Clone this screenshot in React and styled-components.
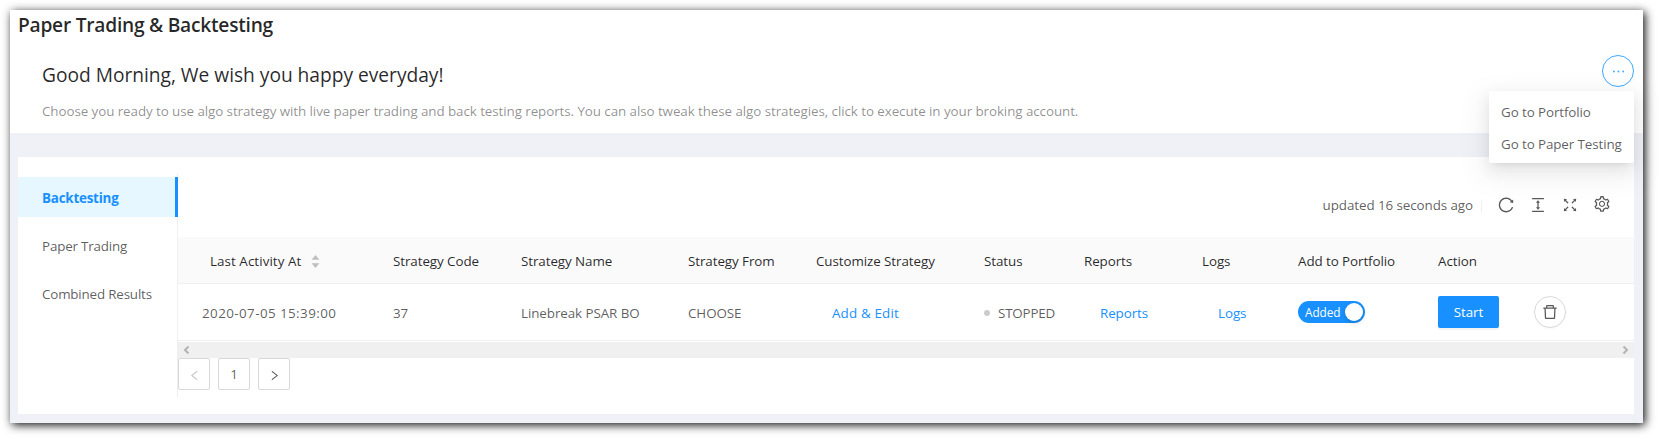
import React from 'react';
import styled, { createGlobalStyle } from 'styled-components';
import {
  AiOutlineReload,
  AiOutlineColumnHeight,
  AiOutlineFullscreen,
  AiOutlineSetting,
  AiOutlineDelete,
  AiOutlineEllipsis,
  AiOutlineLeft,
  AiOutlineRight,
  AiFillCaretUp,
  AiFillCaretDown,
} from 'react-icons/ai';

const GlobalStyle = createGlobalStyle`
  *, *::before, *::after { box-sizing: border-box; }
  body {
    margin: 0;
    background: #fff;
    color: rgba(0, 0, 0, 0.65);
    font: 400 13.4px/22px "Open Sans", "Noto Sans", sans-serif;
    letter-spacing: -0.08px;
    white-space: nowrap;
  }
  a { color: #1890ff; text-decoration: none; }
`;

const Stage = styled.div`
  height: 439px;
  padding: 10px 16px 16px 10px;
  overflow: hidden;
`;

const Window = styled.main`
  height: 413px;
  background: #f0f1f6;
  box-shadow: 2px 2px 9px rgba(0, 0, 0, 0.95);
`;

const Header = styled.header`
  height: 123px;
  padding: 0 9px 0 8px;
  background: #fff;
`;

const Title = styled.h1`
  margin: 0;
  height: 45px;
  color: rgba(0, 0, 0, 0.85);
  font-size: 19.2px;
  font-weight: 600;
  line-height: 30px;
  letter-spacing: -0.25px;
`;

const Welcome = styled.div`
  display: flex;
  justify-content: space-between;
  padding-left: 24px;
`;

const Greeting = styled.h2`
  margin: 6px 0 11px;
  color: rgba(0, 0, 0, 0.85);
  font-size: 19.2px;
  font-weight: 400;
  line-height: 28px;
  letter-spacing: -0.02px;
`;

const Description = styled.p`
  margin: 0;
  color: rgba(0, 0, 0, 0.45);
`;

const MenuAnchor = styled.div`
  position: relative;
  height: 32px;
`;

const CircleButton = styled.button`
  display: flex;
  align-items: center;
  justify-content: center;
  width: 32px;
  height: 32px;
  padding: 0;
  border: 1px solid ${(p) => (p.$active ? '#40a9ff' : '#d9d9d9')};
  border-radius: 50%;
  background: #fff;
  color: ${(p) => (p.$active ? '#40a9ff' : 'rgba(0, 0, 0, 0.65)')};
  font-size: ${(p) => (p.$active ? 17 : 18)}px;
  box-shadow: ${(p) => (p.$active ? 'none' : '0 2px 0 rgba(0, 0, 0, 0.015)')};
`;

const Menu = styled.ul`
  position: absolute;
  z-index: 2;
  top: 36px;
  right: 0;
  width: 145px;
  margin: 0;
  padding: 5px 0 3px;
  list-style: none;
  background: #fff;
  border-radius: 2px;
  box-shadow: 0 3px 6px -4px rgba(0, 0, 0, 0.12), 0 6px 16px 0 rgba(0, 0, 0, 0.08),
    0 9px 28px 8px rgba(0, 0, 0, 0.05);
`;

const MenuItem = styled.li`
  padding: 5px 12px;
  letter-spacing: -0.1px;
`;

const Card = styled.section`
  display: flex;
  height: 257px;
  margin: 24px 9px 0 8px;
  padding-top: 16px;
  background: #fff;
`;

const Tabs = styled.nav`
  display: flex;
  flex: none;
  flex-direction: column;
  gap: 8px;
  width: 160px;
  height: 225px;
  padding-top: 4px;
  border-right: 1px solid #f0f0f0;
`;

const Tab = styled.div`
  height: 40px;
  padding-left: 24px;
  line-height: 43px;
  letter-spacing: -0.18px;
  ${(p) =>
    p.$active &&
    `
    margin-right: -1px;
    border-right: 3px solid #1890ff;
    background: #e6f7ff;
    color: #1890ff;
    font-weight: 700;
    letter-spacing: -0.22px;
  `}
`;

const Content = styled.div`
  flex: 1;
  min-width: 0;
`;

const Toolbar = styled.div`
  display: flex;
  align-items: center;
  justify-content: flex-end;
  height: 64px;
  padding-right: 23px;
`;

const Divider = styled.span`
  width: 1px;
  height: 13px;
  margin: 3px 15px 0 8px;
  background: #f0f0f0;
`;

const ToolIcons = styled.div`
  display: flex;
  align-items: center;
  gap: 14px;
  font-size: 18px;
`;

const SettingsIcon = styled(AiOutlineSetting)`
  margin-top: -2px;
`;

const rowGrid = `
  display: grid;
  grid-template-columns: 191px 128px 167px 128px 168px 100px 118px 96px 140px 96px 1fr;
  align-items: center;
  padding-left: 24px;
`;

const HeadRow = styled.div`
  ${rowGrid}
  height: 47px;
  padding-top: 2px;
  background: #fafafa;
  border-bottom: 1px solid #f0f0f0;
  color: rgba(0, 0, 0, 0.85);
`;

const BodyRow = styled.div`
  ${rowGrid}
  height: 57px;
  border-bottom: 1px solid #f0f0f0;
`;

const SortLabel = styled.span`
  display: flex;
  align-items: center;
  gap: 9px;
  padding-left: 8px;
  letter-spacing: 0.06px;
`;

const Sorter = styled.span`
  display: flex;
  flex-direction: column;
  color: #bfbfbf;
  font-size: 11px;
  svg + svg { margin-top: -3px; }
`;

const Cell = styled.span`
  padding-top: 2px;
`;

const Time = styled(Cell)`
  letter-spacing: 0.42px;
`;

const Link = styled.a`
  padding: 2px 0 0 16px;
  letter-spacing: ${(p) => p.$spacing || '-0.08px'};
`;

const Status = styled.span`
  display: flex;
  align-items: center;
  gap: 8px;
  padding-top: 2px;
  letter-spacing: -0.2px;
  &::before {
    content: '';
    width: 6px;
    height: 6px;
    border-radius: 50%;
    background: #ccc;
  }
`;

const Switch = styled.span`
  display: flex;
  align-items: center;
  justify-content: space-between;
  width: 67px;
  height: 22px;
  padding: 0 2px 0 7px;
  border-radius: 11px;
  background: #1890ff;
  color: #fff;
  font-size: 11.8px;
  line-height: 24px;
  &::after {
    content: '';
    width: 18px;
    height: 18px;
    border-radius: 50%;
    background: #fff;
    box-shadow: 0 2px 4px rgba(0, 35, 11, 0.2);
  }
`;

const PrimaryButton = styled.button`
  width: 61px;
  height: 32px;
  padding: 0;
  border: 0;
  border-radius: 2px;
  background: #1890ff;
  color: #fff;
  font: inherit;
  letter-spacing: -0.1px;
  box-shadow: 0 2px 0 rgba(0, 0, 0, 0.045);
`;

const ScrollBar = styled.div`
  display: flex;
  align-items: center;
  justify-content: space-between;
  height: 16px;
  margin-top: 1px;
  padding: 0 5px;
  background: #f0f0f0;
`;

const ScrollArrow = styled.svg`
  width: 7px;
  height: 8px;
  fill: none;
  stroke: #b3b3b3;
  stroke-width: 2;
`;

const Pagination = styled.div`
  display: flex;
  gap: 8px;
`;

const Page = styled.span`
  display: flex;
  align-items: center;
  justify-content: center;
  width: 32px;
  height: 32px;
  border: 1px solid #d9d9d9;
  border-radius: 2px;
  color: ${(p) => (p.$disabled ? 'rgba(0, 0, 0, 0.25)' : 'rgba(0, 0, 0, 0.65)')};
  svg {
    margin-top: 2px;
    font-size: 13px;
  }
`;

export default function App() {
  return (
    <Stage>
      <GlobalStyle />
      <Window>
        <Header>
          <Title>Paper Trading &amp; Backtesting</Title>
          <Welcome>
            <div>
              <Greeting>Good Morning, We wish you happy everyday!</Greeting>
              <Description>
                Choose you ready to use algo strategy with live paper trading and back testing
                reports. You can also tweak these algo strategies, click to execute in your broking
                account.
              </Description>
            </div>
            <MenuAnchor>
              <CircleButton $active aria-label="More">
                <AiOutlineEllipsis />
              </CircleButton>
              <Menu>
                <MenuItem>Go to Portfolio</MenuItem>
                <MenuItem>Go to Paper Testing</MenuItem>
              </Menu>
            </MenuAnchor>
          </Welcome>
        </Header>
        <Card>
          <Tabs>
            <Tab $active>Backtesting</Tab>
            <Tab>Paper Trading</Tab>
            <Tab>Combined Results</Tab>
          </Tabs>
          <Content>
            <Toolbar>
              <span>updated 16 seconds ago</span>
              <Divider />
              <ToolIcons>
                <AiOutlineReload />
                <AiOutlineColumnHeight />
                <AiOutlineFullscreen />
                <SettingsIcon />
              </ToolIcons>
            </Toolbar>
            <HeadRow>
              <SortLabel>
                Last Activity At
                <Sorter>
                  <AiFillCaretUp />
                  <AiFillCaretDown />
                </Sorter>
              </SortLabel>
              <span>Strategy Code</span>
              <span>Strategy Name</span>
              <span>Strategy From</span>
              <span>Customize Strategy</span>
              <span>Status</span>
              <span>Reports</span>
              <span>Logs</span>
              <span>Add to Portfolio</span>
              <span>Action</span>
            </HeadRow>
            <BodyRow>
              <Time>2020-07-05 15:39:00</Time>
              <Cell>37</Cell>
              <Cell>Linebreak PSAR BO</Cell>
              <Cell>CHOOSE</Cell>
              <Link $spacing="0.15px">Add &amp; Edit</Link>
              <Status>STOPPED</Status>
              <Link>Reports</Link>
              <Link>Logs</Link>
              <Switch>Added</Switch>
              <PrimaryButton>Start</PrimaryButton>
              <CircleButton aria-label="Delete">
                <AiOutlineDelete />
              </CircleButton>
            </BodyRow>
            <ScrollBar>
              <ScrollArrow viewBox="0 0 7 8">
                <path d="M5.5 0.5L2 4l3.5 3.5" />
              </ScrollArrow>
              <ScrollArrow viewBox="0 0 7 8">
                <path d="M1.5 0.5L5 4L1.5 7.5" />
              </ScrollArrow>
            </ScrollBar>
            <Pagination>
              <Page $disabled>
                <AiOutlineLeft />
              </Page>
              <Page>1</Page>
              <Page>
                <AiOutlineRight />
              </Page>
            </Pagination>
          </Content>
        </Card>
      </Window>
    </Stage>
  );
}
